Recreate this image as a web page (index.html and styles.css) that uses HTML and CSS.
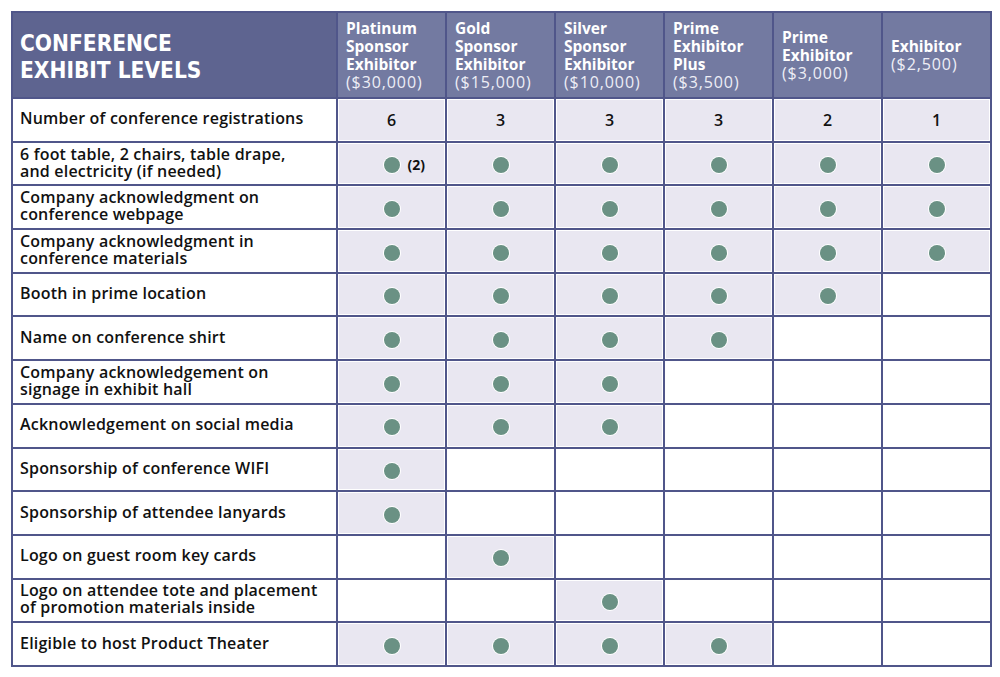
FILE: index.html
```html
<!DOCTYPE html>
<html>
<head>
<meta charset="utf-8">
<link rel="stylesheet" href="styles.css">
</head>
<body>
<table class="levels">
  <colgroup>
    <col class="c-label"><col class="c-lvl"><col class="c-lvl"><col class="c-lvl"><col class="c-lvl"><col class="c-lvl"><col class="c-lvl">
  </colgroup>
  <thead>
    <tr>
      <th class="title">CONFERENCE<br>EXHIBIT LEVELS</th>
      <th class="lvl"><b>Platinum<br>Sponsor<br>Exhibitor</b><br>($30,000)</th>
      <th class="lvl"><b>Gold<br>Sponsor<br>Exhibitor</b><br>($15,000)</th>
      <th class="lvl"><b>Silver<br>Sponsor<br>Exhibitor</b><br>($10,000)</th>
      <th class="lvl"><b>Prime<br>Exhibitor<br>Plus</b><br>($3,500)</th>
      <th class="lvl"><b>Prime<br>Exhibitor</b><br>($3,000)</th>
      <th class="lvl"><b>Exhibitor</b><br>($2,500)</th>
    </tr>
  </thead>
  <tbody>
    <tr><td class="label">Number of conference registrations</td>
      <td class="on num">6</td><td class="on num">3</td><td class="on num">3</td><td class="on num">3</td><td class="on num">2</td><td class="on num">1</td></tr>
    <tr><td class="label">6 foot table, 2 chairs, table drape,<br>and electricity (if needed)</td>
      <td class="on"><span class="dot"><span class="note">(2)</span></span></td><td class="on"><span class="dot"></span></td><td class="on"><span class="dot"></span></td><td class="on"><span class="dot"></span></td><td class="on"><span class="dot"></span></td><td class="on"><span class="dot"></span></td></tr>
    <tr><td class="label">Company acknowledgment on<br>conference webpage</td>
      <td class="on"><span class="dot"></span></td><td class="on"><span class="dot"></span></td><td class="on"><span class="dot"></span></td><td class="on"><span class="dot"></span></td><td class="on"><span class="dot"></span></td><td class="on"><span class="dot"></span></td></tr>
    <tr><td class="label">Company acknowledgment in<br>conference materials</td>
      <td class="on"><span class="dot"></span></td><td class="on"><span class="dot"></span></td><td class="on"><span class="dot"></span></td><td class="on"><span class="dot"></span></td><td class="on"><span class="dot"></span></td><td class="on"><span class="dot"></span></td></tr>
    <tr><td class="label">Booth in prime location</td>
      <td class="on"><span class="dot"></span></td><td class="on"><span class="dot"></span></td><td class="on"><span class="dot"></span></td><td class="on"><span class="dot"></span></td><td class="on"><span class="dot"></span></td><td></td></tr>
    <tr><td class="label">Name on conference shirt</td>
      <td class="on"><span class="dot"></span></td><td class="on"><span class="dot"></span></td><td class="on"><span class="dot"></span></td><td class="on"><span class="dot"></span></td><td></td><td></td></tr>
    <tr><td class="label">Company acknowledgement on<br>signage in exhibit hall</td>
      <td class="on"><span class="dot"></span></td><td class="on"><span class="dot"></span></td><td class="on"><span class="dot"></span></td><td></td><td></td><td></td></tr>
    <tr><td class="label">Acknowledgement on social media</td>
      <td class="on"><span class="dot"></span></td><td class="on"><span class="dot"></span></td><td class="on"><span class="dot"></span></td><td></td><td></td><td></td></tr>
    <tr><td class="label">Sponsorship of conference WIFI</td>
      <td class="on"><span class="dot"></span></td><td></td><td></td><td></td><td></td><td></td></tr>
    <tr><td class="label">Sponsorship of attendee lanyards</td>
      <td class="on"><span class="dot"></span></td><td></td><td></td><td></td><td></td><td></td></tr>
    <tr><td class="label">Logo on guest room key cards</td>
      <td></td><td class="on"><span class="dot"></span></td><td></td><td></td><td></td><td></td></tr>
    <tr><td class="label">Logo on attendee tote and placement<br>of promotion materials inside</td>
      <td></td><td></td><td class="on"><span class="dot"></span></td><td></td><td></td><td></td></tr>
    <tr><td class="label">Eligible to host Product Theater</td>
      <td class="on"><span class="dot"></span></td><td class="on"><span class="dot"></span></td><td class="on"><span class="dot"></span></td><td class="on"><span class="dot"></span></td><td></td><td></td></tr>
  </tbody>
</table>
</body>
</html>
```

FILE: styles.css
```css
html, body {
  margin: 0;
  padding: 0;
  background: #ffffff;
}
body {
  padding: 11px 0 0 11px;
  font-family: "Open Sans", "DejaVu Sans", sans-serif;
}
.levels {
  border-collapse: collapse;
  table-layout: fixed;
  width: 978px;
  border: 2px solid #50568a;
}
.c-label { width: 325px; }
.c-lvl { width: 109px; }
.levels th, .levels td {
  border: 2px solid #50568a;
  padding: 0;
}
.levels thead tr { height: 86px; }
.levels tbody tr { height: 43.7px; }
.title {
  background: #5e6490;
  color: #ffffff;
  text-align: left;
  vertical-align: middle;
  padding: 4px 0 0 7px !important;
  font-family: "DejaVu Sans Condensed", "DejaVu Sans", sans-serif;
  font-stretch: condensed;
  font-weight: bold;
  font-size: 22.5px;
  line-height: 27px;
  letter-spacing: 0;
}
.lvl {
  background: #737aa1;
  text-align: left;
  vertical-align: middle;
  padding: 0 0 0 8px !important;
  font-weight: 400;
  font-size: 16px;
  line-height: 18px;
  letter-spacing: 0.9px;
  color: #eeeef6;
}
.lvl b {
  font-weight: 700;
  font-size: 15.5px;
  letter-spacing: 0;
  color: #ffffff;
}
.label {
  color: #111111;
  font-size: 16px;
  line-height: 17px;
  font-weight: 600;
  padding: 0 0 2px 7px !important;
  vertical-align: middle;
  letter-spacing: 0.2px;
}
.on {
  background: #e9e7f1;
  box-shadow: inset 1px 1px 0 #ffffff, inset -1px -1px 0 #ffffff;
  text-align: center;
  vertical-align: middle;
}
.num {
  font-size: 16px;
  font-weight: 600;
  color: #111111;
}
.dot {
  display: inline-block;
  position: relative;
  width: 16px;
  height: 16px;
  border-radius: 50%;
  background: #6a9184;
  box-shadow: 0 0 0 1px #ffffff;
  vertical-align: middle;
}
.note {
  position: absolute;
  left: 24px;
  top: -1px;
  font-size: 14px;
  font-weight: 700;
  color: #111111;
  line-height: 17px;
}
```
